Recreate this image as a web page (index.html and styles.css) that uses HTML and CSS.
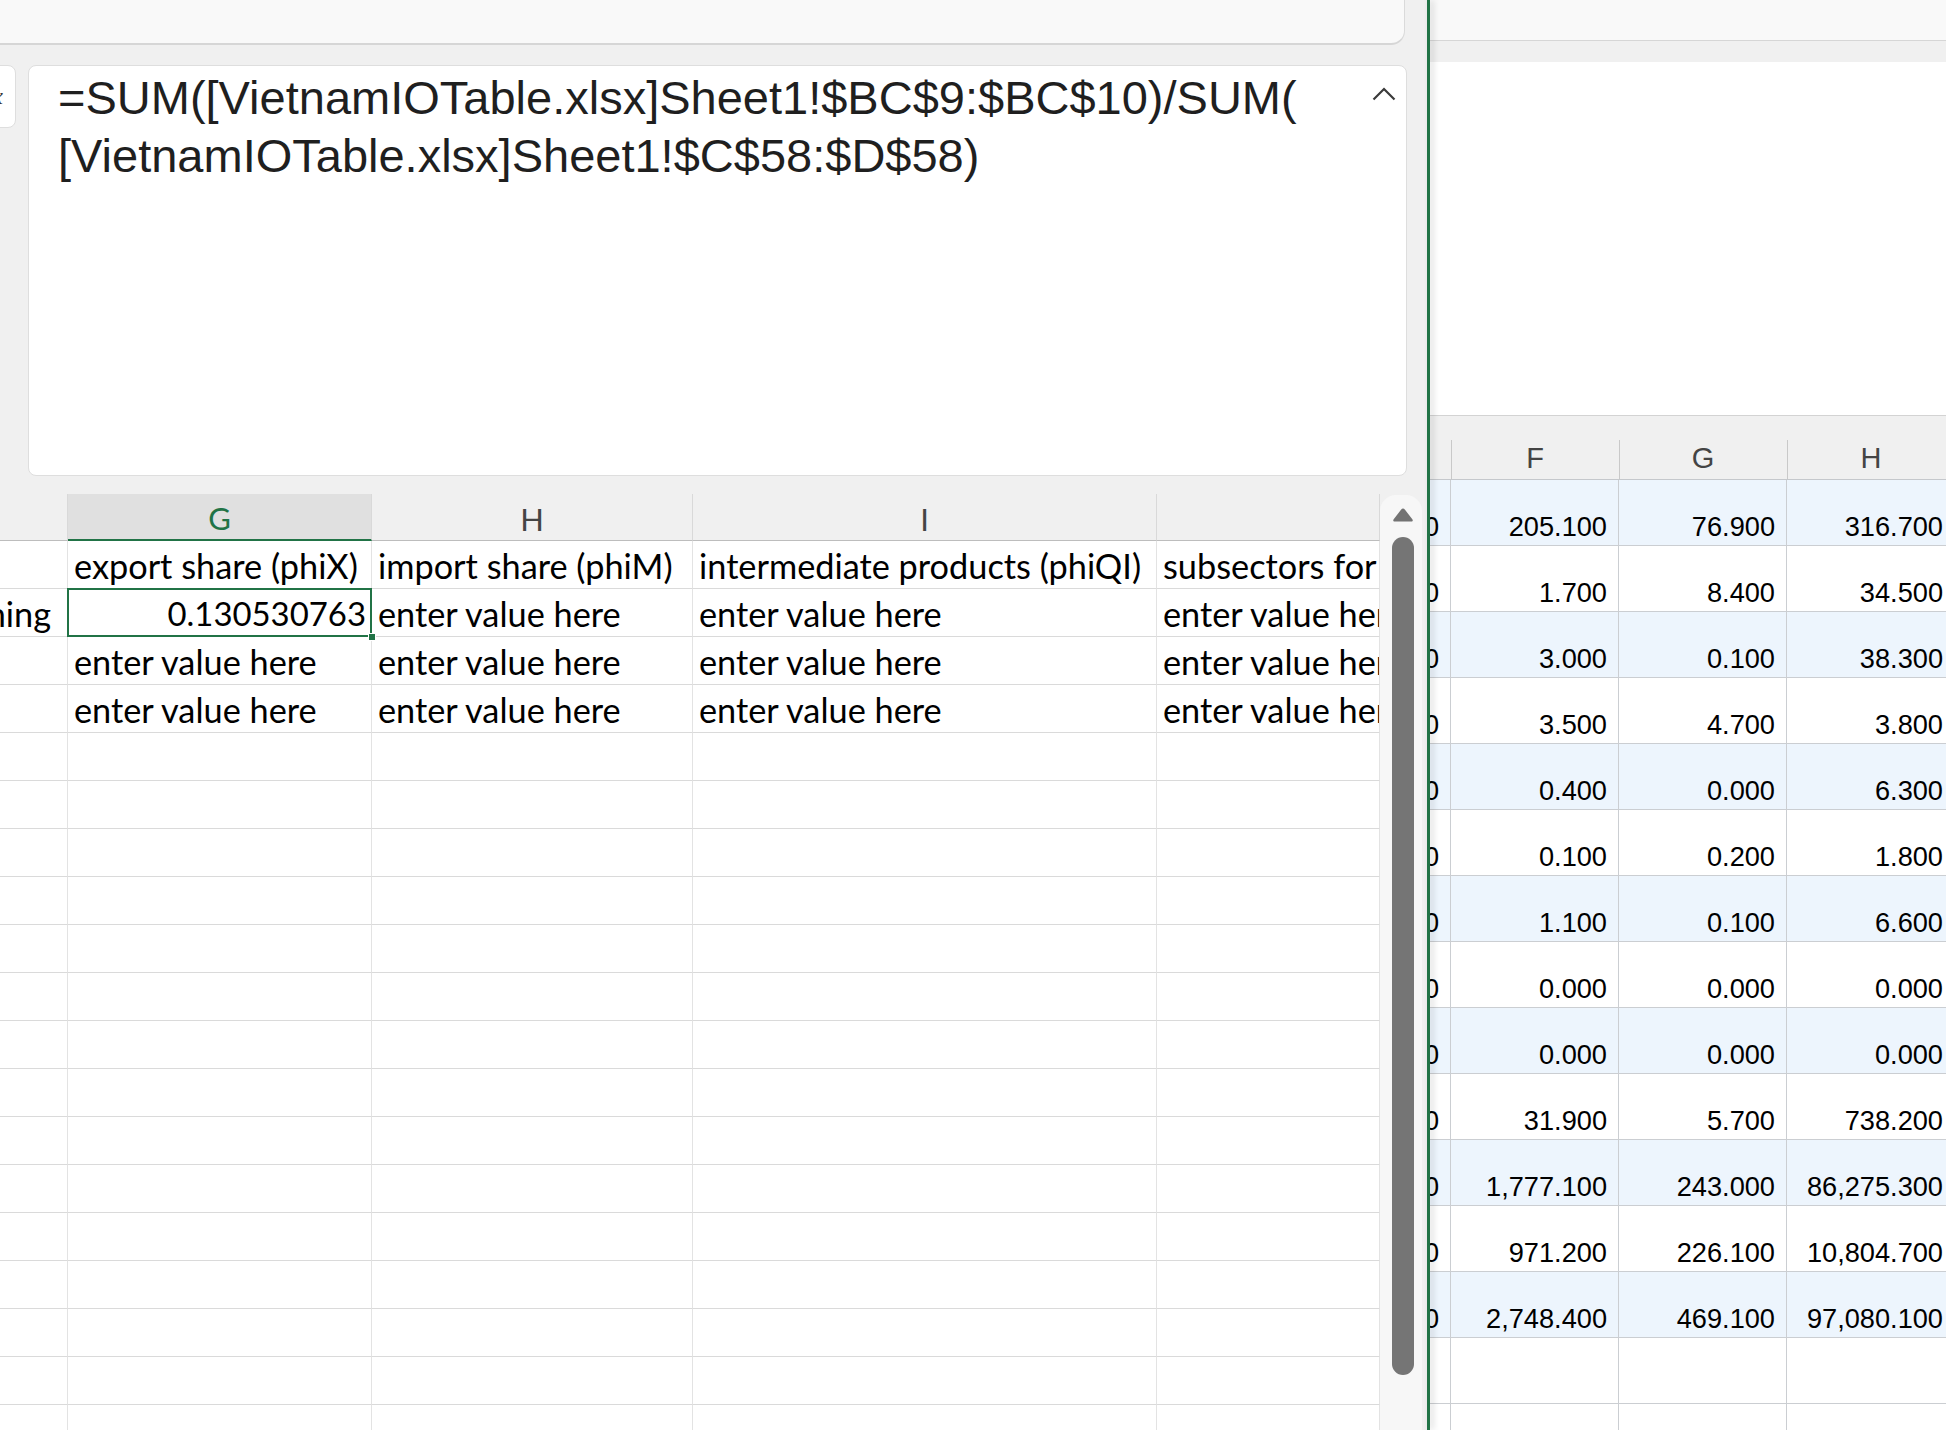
FILE: index.html
```html
<!DOCTYPE html>
<html lang="en">
<head>
<meta charset="utf-8">
<title>Excel formula bar and sheet</title>
<link rel="stylesheet" href="styles.css">
</head>
<body>
<div class="screen">
  <div class="win-left">
    <div class="topbar"></div>
    <div class="fbar">
      <div class="fxbox"><span class="fxmark">fx</span></div>
      <div class="formula">
        <div class="ftext">=SUM([VietnamIOTable.xlsx]Sheet1!$BC$9:$BC$10)/SUM(<br>[VietnamIOTable.xlsx]Sheet1!$C$58:$D$58)</div>
        <svg class="chev" viewBox="0 0 24 14" width="24" height="14"><path d="M1.5 12.5 L12 2 L22.5 12.5" fill="none" stroke="#3b3b3b" stroke-width="2.2"/></svg>
      </div>
    </div>
    <div class="sheet">
      <div class="grid">
        <div class="hc"></div>
        <div class="hc sel">G</div>
        <div class="hc">H</div>
        <div class="hc">I</div>
        <div class="hc"></div>

        <div class="c"></div>
        <div class="c">export share (phiX)</div>
        <div class="c">import share (phiM)</div>
        <div class="c">intermediate products (phiQI)</div>
        <div class="c">subsectors for</div>

        <div class="c clipl">mining</div>
        <div class="c num sel">0.130530763<span class="selbox"></span><span class="handle"></span></div>
        <div class="c">enter value here</div>
        <div class="c">enter value here</div>
        <div class="c">enter value here</div>

        <div class="c"></div>
        <div class="c">enter value here</div>
        <div class="c">enter value here</div>
        <div class="c">enter value here</div>
        <div class="c">enter value here</div>

        <div class="c"></div>
        <div class="c">enter value here</div>
        <div class="c">enter value here</div>
        <div class="c">enter value here</div>
        <div class="c">enter value here</div>

        <div class="c"></div><div class="c"></div><div class="c"></div><div class="c"></div><div class="c"></div>
        <div class="c"></div><div class="c"></div><div class="c"></div><div class="c"></div><div class="c"></div>
        <div class="c"></div><div class="c"></div><div class="c"></div><div class="c"></div><div class="c"></div>
        <div class="c"></div><div class="c"></div><div class="c"></div><div class="c"></div><div class="c"></div>
        <div class="c"></div><div class="c"></div><div class="c"></div><div class="c"></div><div class="c"></div>
        <div class="c"></div><div class="c"></div><div class="c"></div><div class="c"></div><div class="c"></div>
        <div class="c"></div><div class="c"></div><div class="c"></div><div class="c"></div><div class="c"></div>
        <div class="c"></div><div class="c"></div><div class="c"></div><div class="c"></div><div class="c"></div>
        <div class="c"></div><div class="c"></div><div class="c"></div><div class="c"></div><div class="c"></div>
        <div class="c"></div><div class="c"></div><div class="c"></div><div class="c"></div><div class="c"></div>
        <div class="c"></div><div class="c"></div><div class="c"></div><div class="c"></div><div class="c"></div>
        <div class="c"></div><div class="c"></div><div class="c"></div><div class="c"></div><div class="c"></div>
        <div class="c"></div><div class="c"></div><div class="c"></div><div class="c"></div><div class="c"></div>
        <div class="c"></div><div class="c"></div><div class="c"></div><div class="c"></div><div class="c"></div>
        <div class="c"></div><div class="c"></div><div class="c"></div><div class="c"></div><div class="c"></div>
      </div>
      <div class="vscroll">
        <svg class="arrow" viewBox="0 0 22 16" width="22" height="16"><path d="M11 1.5 Q12 1.5 13 2.8 L20.5 12.5 Q21.5 14.5 19 14.5 L3 14.5 Q0.5 14.5 1.5 12.5 L9 2.8 Q10 1.5 11 1.5 Z" fill="#737373"/></svg>
        <div class="thumb"></div>
      </div>
    </div>
  </div>

  <div class="divider"></div>

  <div class="win-right">
    <div class="r-top"></div>
    <div class="r-band"></div>
    <div class="r-blank"></div>
    <div class="r-grid">
      <div class="rh first"></div><div class="rh">F</div><div class="rh">G</div><div class="rh">H</div>

      <div class="rc b">10.000</div><div class="rc b">205.100</div><div class="rc b">76.900</div><div class="rc b">316.700</div>
      <div class="rc">10.000</div><div class="rc">1.700</div><div class="rc">8.400</div><div class="rc">34.500</div>
      <div class="rc b">10.000</div><div class="rc b">3.000</div><div class="rc b">0.100</div><div class="rc b">38.300</div>
      <div class="rc">10.000</div><div class="rc">3.500</div><div class="rc">4.700</div><div class="rc">3.800</div>
      <div class="rc b">10.000</div><div class="rc b">0.400</div><div class="rc b">0.000</div><div class="rc b">6.300</div>
      <div class="rc">10.000</div><div class="rc">0.100</div><div class="rc">0.200</div><div class="rc">1.800</div>
      <div class="rc b">10.000</div><div class="rc b">1.100</div><div class="rc b">0.100</div><div class="rc b">6.600</div>
      <div class="rc">10.000</div><div class="rc">0.000</div><div class="rc">0.000</div><div class="rc">0.000</div>
      <div class="rc b">10.000</div><div class="rc b">0.000</div><div class="rc b">0.000</div><div class="rc b">0.000</div>
      <div class="rc">10.000</div><div class="rc">31.900</div><div class="rc">5.700</div><div class="rc">738.200</div>
      <div class="rc b">10.000</div><div class="rc b">1,777.100</div><div class="rc b">243.000</div><div class="rc b">86,275.300</div>
      <div class="rc">10.000</div><div class="rc">971.200</div><div class="rc">226.100</div><div class="rc">10,804.700</div>
      <div class="rc b">10.000</div><div class="rc b">2,748.400</div><div class="rc b">469.100</div><div class="rc b">97,080.100</div>
      <div class="rc"></div><div class="rc"></div><div class="rc"></div><div class="rc"></div>
      <div class="rc"></div><div class="rc"></div><div class="rc"></div><div class="rc"></div>
    </div>
  </div>
</div>
</body>
</html>
```

FILE: styles.css
```css
* { box-sizing: border-box; }

html, body {
  margin: 0;
  padding: 0;
  background: #ffffff;
}

.screen {
  display: flex;
  width: 1946px;
  height: 1430px;
  overflow: hidden;
}

/* ---------- left window ---------- */
.win-left {
  width: 1427px;
  flex: none;
  background: #f0f0f0;
  display: flex;
  flex-direction: column;
  overflow: hidden;
}

.topbar {
  height: 45px;
  flex: none;
  margin-right: 22px;
  background: #f9f9f9;
  border-bottom: 2px solid #d6d6d6;
  border-right: 1px solid #dadada;
  border-bottom-right-radius: 14px;
}

.fbar {
  display: flex;
  align-items: flex-start;
  gap: 12px;
  margin-top: 20px;
  flex: none;
}

.fxbox {
  width: 60px;
  height: 63px;
  margin-left: -44px;
  background: #ffffff;
  border: 1px solid #dedede;
  border-radius: 8px;
  display: flex;
  align-items: center;
  justify-content: flex-end;
  padding-right: 12px;
  overflow: hidden;
}

.fxmark {
  font-family: "Liberation Serif", serif;
  font-style: italic;
  font-size: 24px;
  color: #333;
}

.formula {
  width: 1379px;
  height: 411px;
  background: #ffffff;
  border: 1px solid #dedede;
  border-radius: 8px;
  display: flex;
  align-items: flex-start;
  padding: 3px 10px 0 29px;
}

.ftext {
  flex: 1;
  font-family: "Liberation Sans", Arial, sans-serif;
  font-size: 47px;
  line-height: 58px;
  color: #1f1f1f;
  white-space: nowrap;
}

.chev {
  flex: none;
  margin-top: 18px;
}

.sheet {
  display: flex;
  margin-top: 18px;
  flex: 1;
  min-height: 0;
}

.grid {
  width: 1380px;
  flex: none;
  display: grid;
  grid-template-columns: 68px 304px 321px 464px 223px;
  grid-template-rows: 47px;
  grid-auto-rows: 48px;
  background: #ffffff;
}

.hc {
  background: #f0f0f0;
  border-right: 1px solid #d9d9d9;
  border-bottom: 1px solid #bdbdbd;
  display: flex;
  align-items: center;
  justify-content: center;
  font-family: Lato, "Liberation Sans", sans-serif;
  font-size: 31px;
  color: #444444;
  padding-top: 3px;
}

.hc.sel {
  background: #e0e0e0;
  color: #217346;
  border-bottom: 2px solid #217346;
}

.c {
  background: #ffffff;
  border-right: 1px solid #e3e3e3;
  border-bottom: 1px solid #dadada;
  display: flex;
  align-items: flex-end;
  padding: 0 0 5px 6px;
  font-family: Lato, "Liberation Sans", sans-serif;
  font-size: 34.3px;
  line-height: 34px;
  color: #000000;
  white-space: nowrap;
  overflow: hidden;
}

.c.num {
  justify-content: flex-end;
  padding-right: 5px;
  font-size: 32.9px;
}

.c.clipl {
  justify-content: flex-end;
  padding-right: 16px;
}

.c.sel {
  position: relative;
  overflow: visible;
}

.selbox {
  position: absolute;
  top: -1px;
  left: -1px;
  right: -1px;
  bottom: -1px;
  border: 2px solid #217346;
  z-index: 2;
}

.handle {
  position: absolute;
  right: -5px;
  bottom: -5px;
  width: 8px;
  height: 8px;
  background: #217346;
  border: 1px solid #ffffff;
  z-index: 3;
}

.vscroll {
  width: 42px;
  flex: none;
  margin-top: 1px;
  background: #f7f7f7;
  border-top-left-radius: 16px;
  border-top-right-radius: 16px;
  padding: 12px 0 0 12px;
  display: flex;
  flex-direction: column;
  align-items: flex-start;
}

.arrow {
  flex: none;
}

.thumb {
  margin-top: 14px;
  width: 22px;
  height: 838px;
  border-radius: 11px;
  background: #757575;
  flex: none;
}

/* ---------- divider ---------- */
.divider {
  width: 3px;
  flex: none;
  background: #217346;
  box-shadow: 3px 0 6px rgba(0, 0, 0, 0.18);
  position: relative;
  z-index: 1;
}

/* ---------- right window ---------- */
.win-right {
  flex: 1;
  min-width: 0;
  display: flex;
  flex-direction: column;
  background: #ffffff;
  overflow: hidden;
}

.r-top {
  height: 41px;
  flex: none;
  background: #f9f9f9;
  border-bottom: 1px solid #d6d6d6;
}

.r-band {
  height: 21px;
  flex: none;
  background: #f0f0f0;
}

.r-blank {
  height: 353px;
  flex: none;
  background: #ffffff;
}

.r-grid {
  display: grid;
  grid-template-columns: 21px 168px 168px 168px;
  grid-template-rows: 65px;
  grid-auto-rows: 66px;
  width: 525px;
  flex: none;
}

.rh {
  background: linear-gradient(#c9c9c9, #c9c9c9) left bottom / 1px 39px no-repeat, #f0f0f0;
  border-top: 1px solid #d3d3d3;
  border-bottom: 1px solid #c5c8cc;
  display: flex;
  align-items: flex-end;
  justify-content: center;
  padding-bottom: 6px;
  font-family: "Liberation Sans", Arial, sans-serif;
  font-size: 29px;
  line-height: 29px;
  color: #444444;
}

.rh.first {
  background: #f0f0f0;
}

.rc {
  background: #ffffff;
  border-right: 1px solid #cbced2;
  border-bottom: 1px solid #cbced2;
  display: flex;
  align-items: flex-end;
  justify-content: flex-end;
  padding: 0 11px 5px 0;
  font-family: "Liberation Sans", Arial, sans-serif;
  font-size: 27.2px;
  line-height: 27px;
  color: #000000;
  white-space: nowrap;
  overflow: hidden;
}

.rc.b {
  background: #edf5fd;
}
```
